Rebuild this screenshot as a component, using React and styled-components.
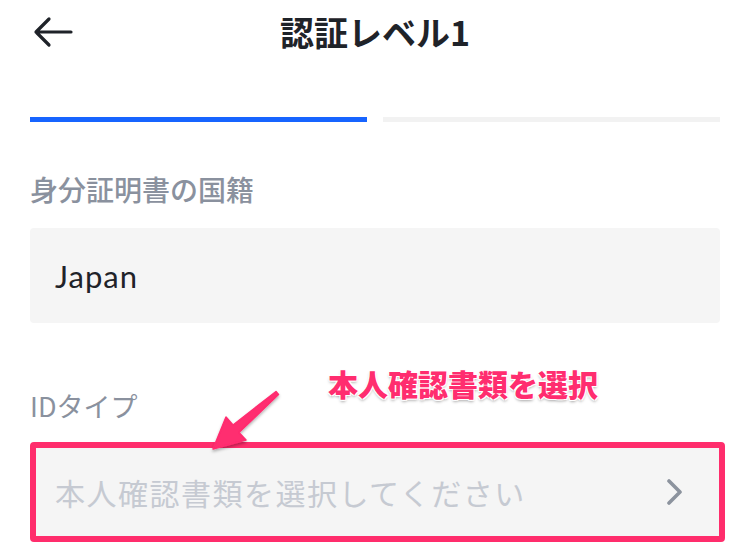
import React from "react";
import styled, { createGlobalStyle } from "styled-components";

const Global = createGlobalStyle`
  html, body { margin: 0; padding: 0; background: #ffffff; }
  body { font-family: "Noto Sans CJK JP", "Noto Sans", sans-serif; }
`;

const Page = styled.div`
  position: relative;
  width: 750px;
  height: 547px;
  overflow: hidden;
  background: #fff;
`;

const Header = styled.header`
  height: 64px;
  display: grid;
  grid-template-columns: 100px 1fr 100px;
  align-items: center;
`;

const BackButton = styled.div`
  display: flex;
  align-items: center;
  padding-left: 33px;
  height: 100%;
  color: #1f2329;
`;

const Title = styled.h1`
  margin: 0;
  text-align: center;
  font-size: 34px;
  font-weight: 700;
  color: #1f2329;
  line-height: 1;
  letter-spacing: 0;
`;

const Content = styled.div`
  padding: 0 30px;
`;

const Progress = styled.div`
  margin-top: 53px;
  display: grid;
  grid-template-columns: 1fr 1fr;
  gap: 16px;
`;

const Bar = styled.div`
  height: 5px;
  background: ${(p) => (p.$active ? "#1764ff" : "#f2f2f2")};
`;

const Label = styled.div`
  margin-top: ${(p) => p.$top}px;
  font-size: ${(p) => (p.$bold ? 28 : 27)}px;
  line-height: 28px;
  font-weight: ${(p) => (p.$bold ? 500 : 400)};
  color: #8a919e;
`;

const Field = styled.div`
  box-sizing: border-box;
  margin-top: ${(p) => p.$top}px;
  height: ${(p) => p.$height}px;
  background: #f5f5f5;
  border-radius: 4px;
  display: flex;
  align-items: center;
  justify-content: space-between;
  padding: 0 25px;
  ${(p) =>
    p.$highlight &&
    `
    margin-right: -5px;
    border: 6px solid #ff2d6c;
    padding: 0 35px 0 19px;
  `}
`;

const Value = styled.span`
  font-family: "Lato", "Noto Sans", sans-serif;
  font-size: 31px;
  letter-spacing: 1px;
  color: #1f2329;
`;

const Placeholder = styled.span`
  font-size: 30px;
  letter-spacing: 1.5px;
  color: #c6cad2;
`;

const Callout = styled.div`
  position: absolute;
  left: 328px;
  top: 368px;
  font-size: 30px;
  line-height: 1;
  font-weight: 900;
  color: #ff2d6f;
  text-shadow: -1px -1px 0 #fff, 1px -1px 0 #fff, -1px 1px 0 #fff,
    1px 1px 0 #fff, 0 2px 3px rgba(0, 0, 0, 0.35);
`;

const Overlay = styled.svg`
  position: absolute;
  left: 0;
  top: 0;
  pointer-events: none;
`;

export default function App() {
  return (
    <Page>
      <Global />
      <Header>
        <BackButton>
          <svg width="40" height="32" viewBox="0 0 40 32" fill="none">
            <path
              d="M38 16H3M16 3L3 16l13 13"
              stroke="#1f2329"
              strokeWidth="3.2"
              strokeLinecap="round"
              strokeLinejoin="round"
            />
          </svg>
        </BackButton>
        <Title>認証レベル1</Title>
        <div />
      </Header>
      <Content>
        <Progress>
          <Bar $active />
          <Bar />
        </Progress>
        <Label $top={53} $bold>
          身分証明書の国籍
        </Label>
        <Field $top={25} $height={95}>
          <Value>Japan</Value>
        </Field>
        <Label $top={69}>IDタイプ</Label>
        <Field $top={22} $height={100} $highlight>
          <Placeholder>本人確認書類を選択してください</Placeholder>
          <svg width="18" height="26" viewBox="0 0 18 26" fill="none">
            <path
              d="M3 2l11 11L3 24"
              stroke="#8c939e"
              strokeWidth="3.6"
              strokeLinecap="round"
              strokeLinejoin="round"
            />
          </svg>
        </Field>
      </Content>
      <Callout>本人確認書類を選択</Callout>
      <Overlay width="750" height="547" viewBox="0 0 750 547">
        <defs>
          <filter id="sh" x="-20%" y="-20%" width="140%" height="140%">
            <feDropShadow dx="0" dy="2" stdDeviation="1.5" floodColor="#000" floodOpacity="0.3" />
          </filter>
        </defs>
        <polygon
          points="276,391.5 233,425 226,417 213,449 246,440 239,432.5 278.5,394.5"
          fill="#ff2d6f"
          stroke="#ff2d6f"
          strokeWidth="1.5"
          strokeLinejoin="round"
          filter="url(#sh)"
        />
      </Overlay>
    </Page>
  );
}
